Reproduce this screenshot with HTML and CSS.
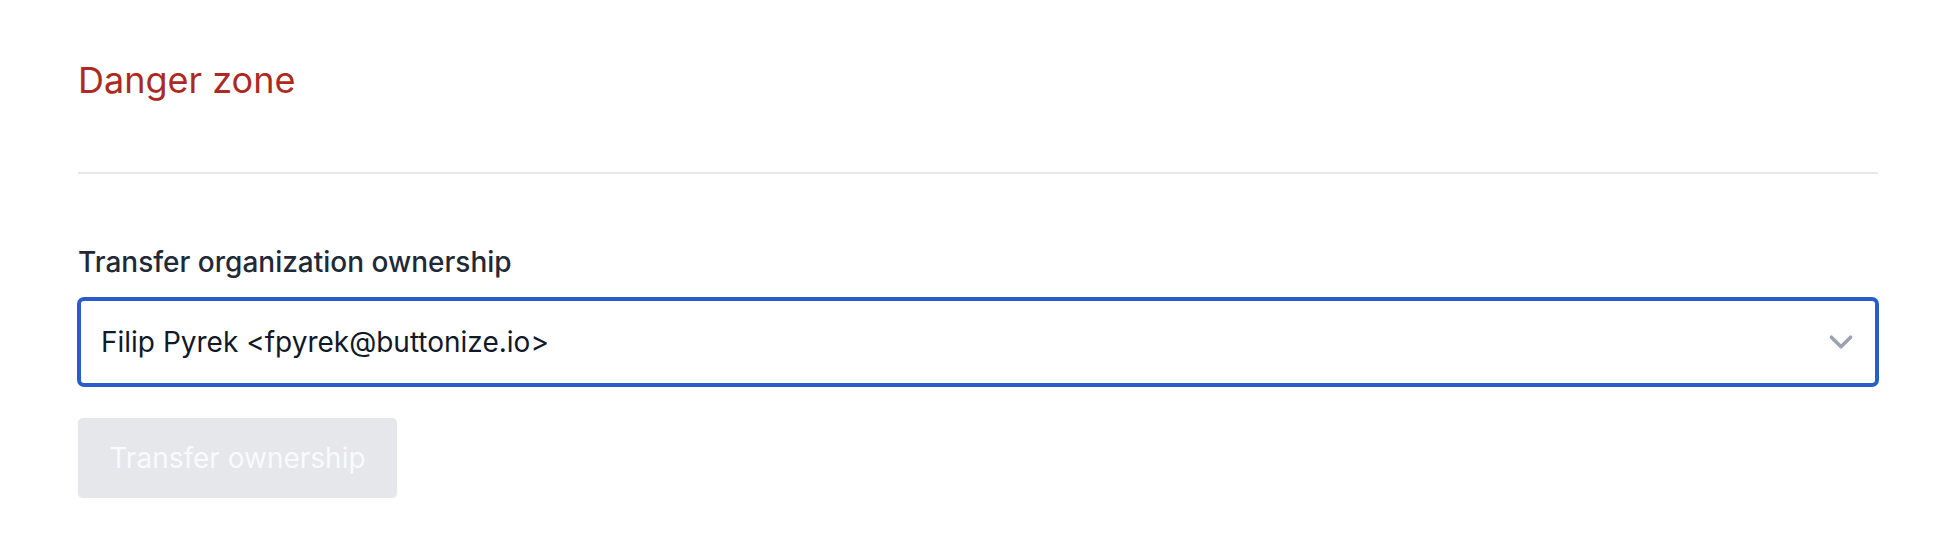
FILE: index.html
```html
<!DOCTYPE html>
<html lang="en">
<head>
<meta charset="utf-8">
<title>Danger zone</title>
<link rel="stylesheet" href="styles.css">
</head>
<body>
<main class="page">
  <h2 class="title">Danger zone</h2>
  <hr class="divider">
  <section class="field">
    <label class="label" for="owner">Transfer organization ownership</label>
    <div class="select" id="owner">
      <span class="select-value">Filip Pyrek &lt;fpyrek@buttonize.io&gt;</span>
      <svg class="chevron" viewBox="0 0 20 20" fill="none" stroke="currentColor" stroke-width="1.5" stroke-linecap="round" stroke-linejoin="round"><path d="M6 8l4 4 4-4"/></svg>
    </div>
    <div class="actions">
      <button class="btn" disabled>Transfer ownership</button>
    </div>
  </section>
</main>
</body>
</html>
```
FILE: styles.css
```css
* { box-sizing: border-box; }
html, body { margin: 0; padding: 0; background: #ffffff; }
body { font-family: Inter, "Noto Sans", sans-serif; }
.page {
  padding: 52px 80px 0 78px;
  display: flex;
  flex-direction: column;
}
.title {
  margin: 0;
  font-size: 36px;
  font-weight: 400;
  line-height: 56px;
  color: #ad2a22;
}
.divider {
  margin: 64px 0 0;
  border: 0;
  height: 2px;
  background: #e5e7eb;
}
.field {
  display: flex;
  flex-direction: column;
  margin-top: 68px;
}
.label {
  font-size: 28px;
  font-weight: 500;
  line-height: 40px;
  color: #1f2937;
}
.select {
  margin: 15px -1px 0;
  height: 90px;
  border: 4px solid #2a5dc9;
  border-radius: 7px;
  display: flex;
  align-items: center;
  justify-content: space-between;
  padding: 0 10px 0 20px;
}
.select-value {
  font-size: 28px;
  line-height: 40px;
  color: #111827;
}
.chevron { color: #9ca3af; width: 48px; height: 48px; }
.actions { margin-top: 31px; display: flex; }
.btn {
  font-family: Inter, "Noto Sans", sans-serif;
  font-size: 28px;
  font-weight: 400;
  line-height: 40px;
  color: #f9fafb;
  background: #e5e7eb;
  border: 0;
  border-radius: 5px;
  width: 319px;
  height: 80px;
  padding: 0;
  box-shadow: 0 1px 2px rgba(0,0,0,0.05);
}
```
